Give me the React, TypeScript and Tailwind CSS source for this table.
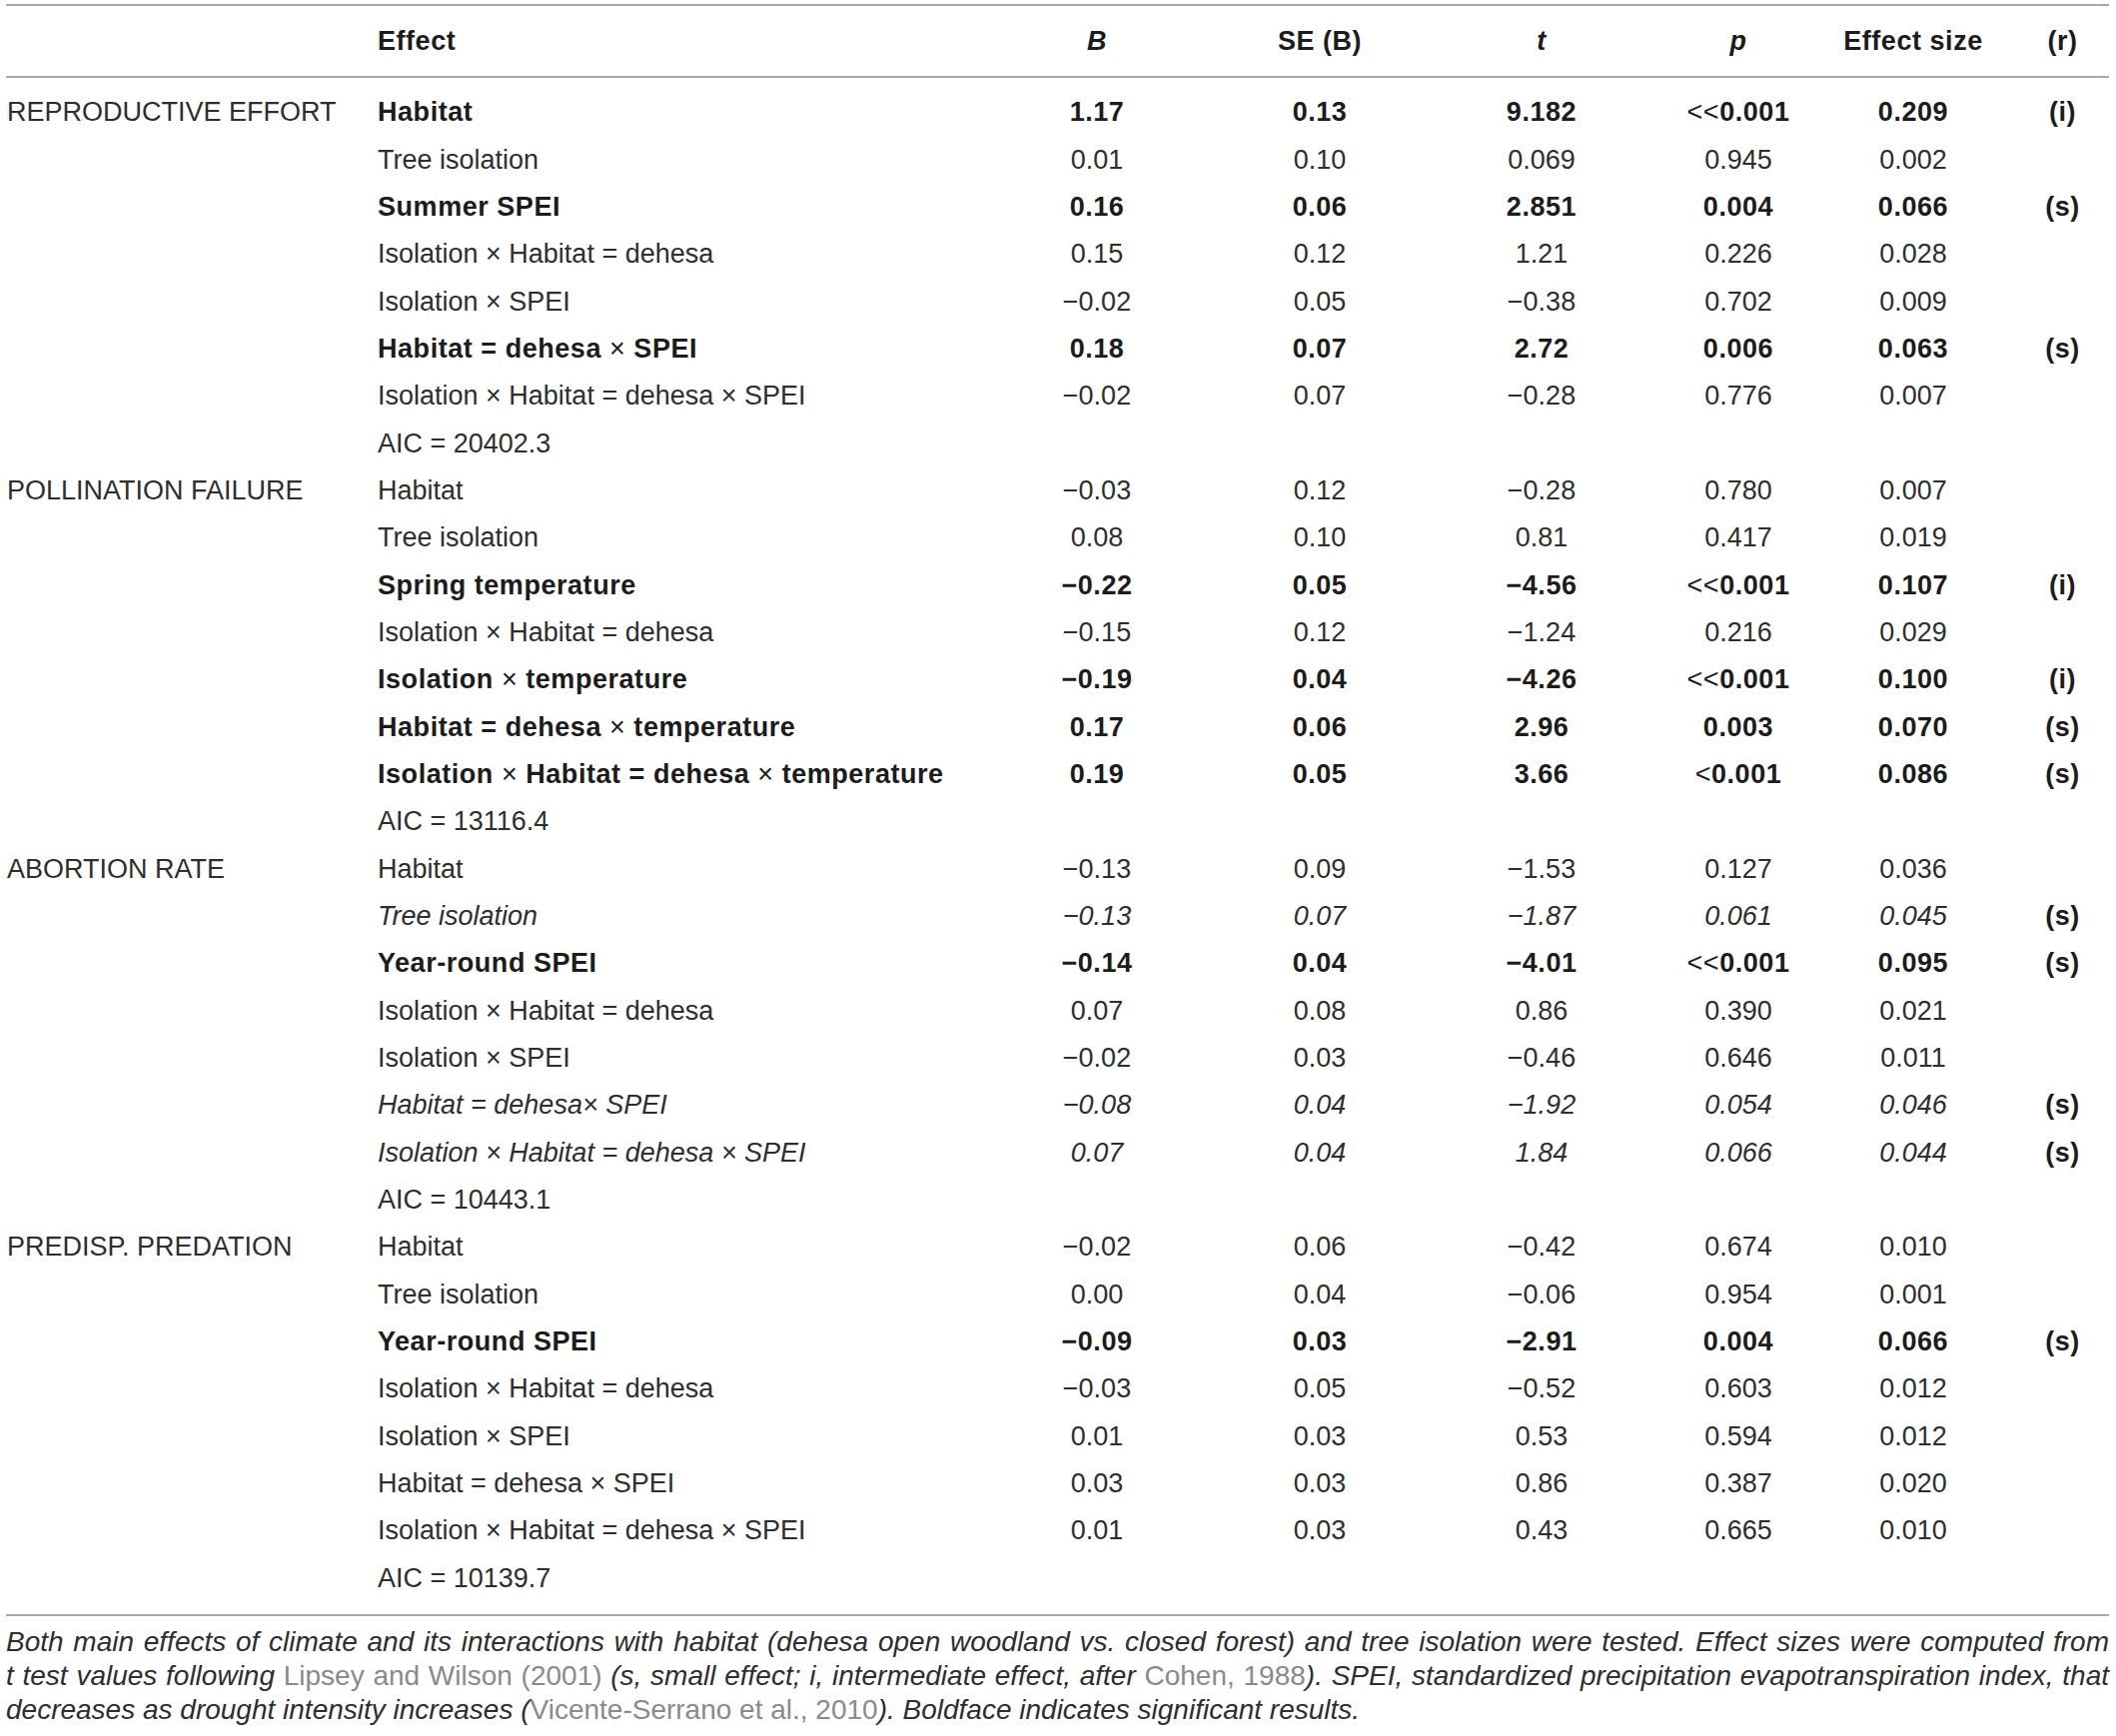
import React from "react";

type Style = "n" | "b" | "i";
type Row = {
  group?: string;
  effect: string;
  vals?: string[];
  r?: string;
  s: Style;
};

const rows: Row[] = [
  { group: "REPRODUCTIVE EFFORT", effect: "Habitat", vals: ["1.17", "0.13", "9.182", "<<0.001", "0.209"], r: "(i)", s: "b" },
  { effect: "Tree isolation", vals: ["0.01", "0.10", "0.069", "0.945", "0.002"], s: "n" },
  { effect: "Summer SPEI", vals: ["0.16", "0.06", "2.851", "0.004", "0.066"], r: "(s)", s: "b" },
  { effect: "Isolation × Habitat = dehesa", vals: ["0.15", "0.12", "1.21", "0.226", "0.028"], s: "n" },
  { effect: "Isolation × SPEI", vals: ["−0.02", "0.05", "−0.38", "0.702", "0.009"], s: "n" },
  { effect: "Habitat = dehesa × SPEI", vals: ["0.18", "0.07", "2.72", "0.006", "0.063"], r: "(s)", s: "b" },
  { effect: "Isolation × Habitat = dehesa × SPEI", vals: ["−0.02", "0.07", "−0.28", "0.776", "0.007"], s: "n" },
  { effect: "AIC = 20402.3", s: "n" },
  { group: "POLLINATION FAILURE", effect: "Habitat", vals: ["−0.03", "0.12", "−0.28", "0.780", "0.007"], s: "n" },
  { effect: "Tree isolation", vals: ["0.08", "0.10", "0.81", "0.417", "0.019"], s: "n" },
  { effect: "Spring temperature", vals: ["−0.22", "0.05", "−4.56", "<<0.001", "0.107"], r: "(i)", s: "b" },
  { effect: "Isolation × Habitat = dehesa", vals: ["−0.15", "0.12", "−1.24", "0.216", "0.029"], s: "n" },
  { effect: "Isolation × temperature", vals: ["−0.19", "0.04", "−4.26", "<<0.001", "0.100"], r: "(i)", s: "b" },
  { effect: "Habitat = dehesa × temperature", vals: ["0.17", "0.06", "2.96", "0.003", "0.070"], r: "(s)", s: "b" },
  { effect: "Isolation × Habitat = dehesa × temperature", vals: ["0.19", "0.05", "3.66", "<0.001", "0.086"], r: "(s)", s: "b" },
  { effect: "AIC = 13116.4", s: "n" },
  { group: "ABORTION RATE", effect: "Habitat", vals: ["−0.13", "0.09", "−1.53", "0.127", "0.036"], s: "n" },
  { effect: "Tree isolation", vals: ["−0.13", "0.07", "−1.87", "0.061", "0.045"], r: "(s)", s: "i" },
  { effect: "Year-round SPEI", vals: ["−0.14", "0.04", "−4.01", "<<0.001", "0.095"], r: "(s)", s: "b" },
  { effect: "Isolation × Habitat = dehesa", vals: ["0.07", "0.08", "0.86", "0.390", "0.021"], s: "n" },
  { effect: "Isolation × SPEI", vals: ["−0.02", "0.03", "−0.46", "0.646", "0.011"], s: "n" },
  { effect: "Habitat = dehesa× SPEI", vals: ["−0.08", "0.04", "−1.92", "0.054", "0.046"], r: "(s)", s: "i" },
  { effect: "Isolation × Habitat = dehesa × SPEI", vals: ["0.07", "0.04", "1.84", "0.066", "0.044"], r: "(s)", s: "i" },
  { effect: "AIC = 10443.1", s: "n" },
  { group: "PREDISP. PREDATION", effect: "Habitat", vals: ["−0.02", "0.06", "−0.42", "0.674", "0.010"], s: "n" },
  { effect: "Tree isolation", vals: ["0.00", "0.04", "−0.06", "0.954", "0.001"], s: "n" },
  { effect: "Year-round SPEI", vals: ["−0.09", "0.03", "−2.91", "0.004", "0.066"], r: "(s)", s: "b" },
  { effect: "Isolation × Habitat = dehesa", vals: ["−0.03", "0.05", "−0.52", "0.603", "0.012"], s: "n" },
  { effect: "Isolation × SPEI", vals: ["0.01", "0.03", "0.53", "0.594", "0.012"], s: "n" },
  { effect: "Habitat = dehesa × SPEI", vals: ["0.03", "0.03", "0.86", "0.387", "0.020"], s: "n" },
  { effect: "Isolation × Habitat = dehesa × SPEI", vals: ["0.01", "0.03", "0.43", "0.665", "0.010"], s: "n" },
  { effect: "AIC = 10139.7", s: "n" },
];

const grid =
  "grid grid-cols-[372px_610px_220px_226px_218px_176px_174px_109px] items-center";

function styleCls(s: Style) {
  if (s === "b") return "font-bold tracking-[0.02em] text-[#1c1c1c]";
  if (s === "i") return "italic";
  return "";
}

function EffectText({ text, s }: { text: string; s: Style }) {
  if (s !== "b") return <>{text}</>;
  const parts = text.split("×");
  return (
    <>
      {parts.map((p, i) => (
        <React.Fragment key={i}>
          {i > 0 && <span className="font-normal">×</span>}
          {p}
        </React.Fragment>
      ))}
    </>
  );
}

function Val({ v, s }: { v: string; s: Style }) {
  if (s === "b") {
    const m = v.match(/^(<+)(.*)$/);
    if (m) {
      return (
        <>
          <span className="font-normal">{m[1]}</span>
          {m[2]}
        </>
      );
    }
  }
  return <>{v}</>;
}

export default function App() {
  return (
    <div
      className="w-[2118px] bg-white pt-[4px] text-[#2e2e2e]"
      style={{ fontFamily: '"Liberation Sans", Arial, sans-serif' }}
    >
      <div className="ml-[6px] w-[2105px]">
        {/* header */}
        <div className="h-[2px] bg-[#a8a8a8]" />
        <div className={`${grid} h-[70px] text-[27px] font-bold tracking-[0.02em] text-[#1c1c1c]`}>
          <div />
          <div>Effect</div>
          <div className="text-center italic">B</div>
          <div className="text-center">SE (B)</div>
          <div className="text-center italic">t</div>
          <div className="text-center italic">p</div>
          <div className="text-center">Effect size</div>
          <div className="pl-[16px] text-center">(r)</div>
        </div>
        <div className="h-[2px] bg-[#a8a8a8]" />

        {/* body */}
        <div className="pt-[11px] pb-[12px]">
          {rows.map((row, i) => (
            <div key={i} className={`${grid} h-[47.35px] text-[27px] leading-none`}>
              <div className="pl-[1px] whitespace-nowrap">{row.group ?? ""}</div>
              <div className={`whitespace-nowrap ${styleCls(row.s)}`}>
                <EffectText text={row.effect} s={row.s} />
              </div>
              {[0, 1, 2, 3, 4].map((k) => (
                <div key={k} className={`text-center whitespace-nowrap ${styleCls(row.s)}`}>
                  {row.vals ? <Val v={row.vals[k]} s={row.s} /> : null}
                </div>
              ))}
              <div className="pl-[16px] text-center font-bold tracking-[0.02em] text-[#1c1c1c]">
                {row.r ?? ""}
              </div>
            </div>
          ))}
        </div>
        <div className="h-[2px] bg-[#a8a8a8]" />

        {/* caption */}
        <div className="mt-[9px] text-[28px] leading-[34px] italic text-[#2e2e2e]">
          <div className="whitespace-nowrap text-justify [text-align-last:justify]">
            Both main effects of climate and its interactions with habitat (dehesa open woodland vs. closed forest) and tree isolation were tested. Effect sizes were computed from
          </div>
          <div className="whitespace-nowrap text-justify [text-align-last:justify]">
            t test values following <span className="not-italic text-[#8a8a8a]">Lipsey and Wilson (2001)</span> (s, small effect; i, intermediate effect, after <span className="not-italic text-[#8a8a8a]">Cohen, 1988</span>). SPEI, standardized precipitation evapotranspiration index, that
          </div>
          <div className="whitespace-nowrap">
            decreases as drought intensity increases (<span className="not-italic text-[#8a8a8a]">Vicente-Serrano et al., 2010</span>). Boldface indicates significant results.
          </div>
        </div>
        <div className="h-[20px]" />
      </div>
    </div>
  );
}
